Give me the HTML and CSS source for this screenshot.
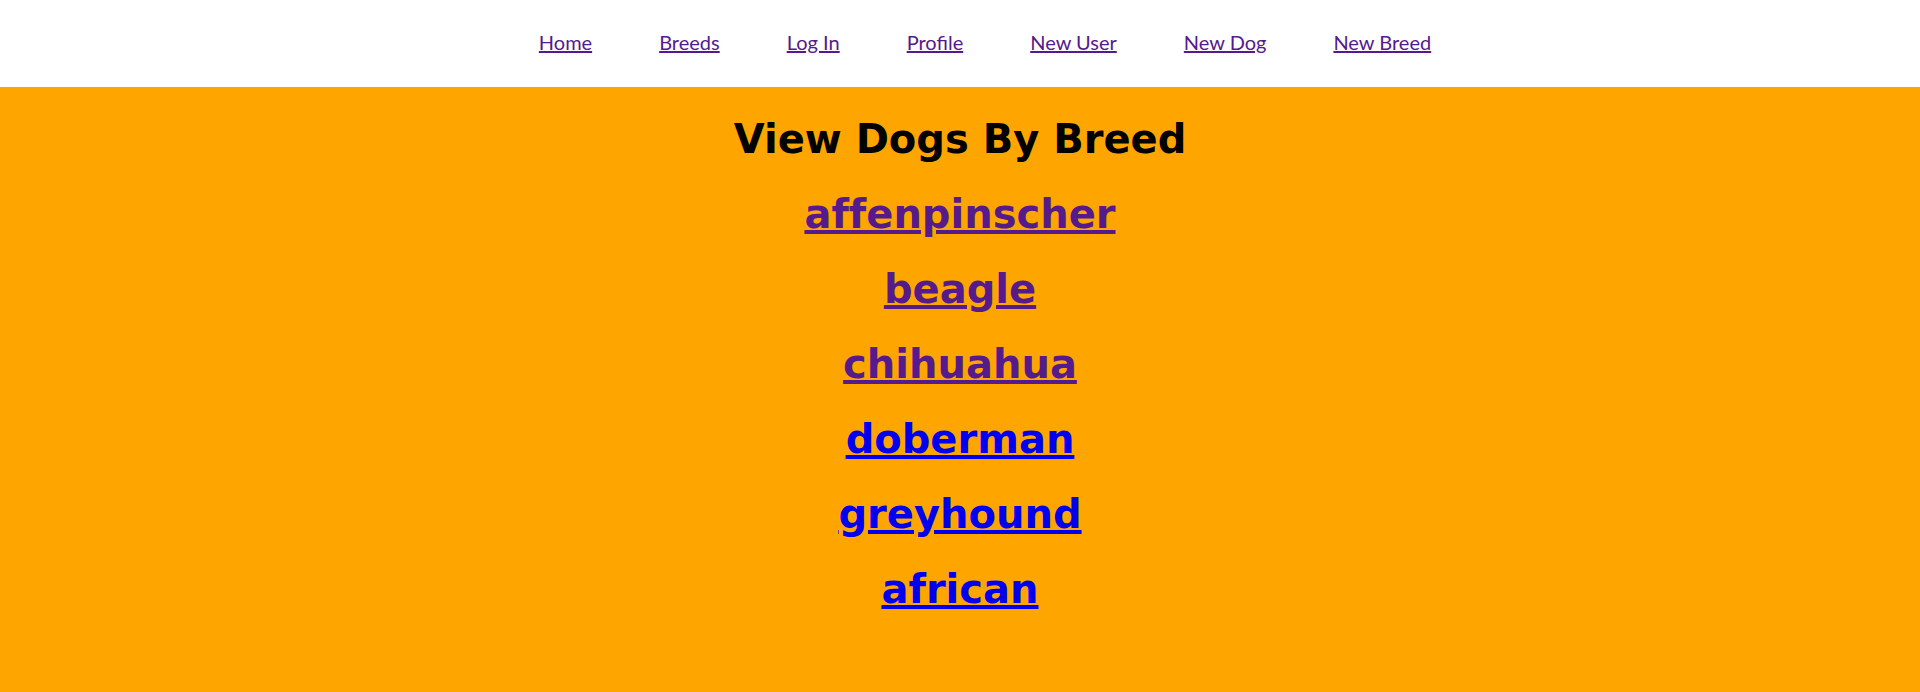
FILE: index.html
```html
<!DOCTYPE html>
<html>
<head>
<meta charset="utf-8">
<link rel="stylesheet" href="styles.css">
</head>
<body>
<nav class="topnav">
  <ul class="nav-list">
    <li><a class="nav-link" href="#">Home</a></li>
    <li><a class="nav-link" href="#">Breeds</a></li>
    <li><a class="nav-link" href="#">Log In</a></li>
    <li><a class="nav-link" href="#">Profile</a></li>
    <li><a class="nav-link" href="#">New User</a></li>
    <li><a class="nav-link" href="#">New Dog</a></li>
    <li><a class="nav-link" href="#">New Breed</a></li>
  </ul>
</nav>
<main class="content">
  <h1 class="title">View Dogs By Breed</h1>
  <a class="breed visited" href="#">affenpinscher</a>
  <a class="breed visited" href="#">beagle</a>
  <a class="breed visited" href="#">chihuahua</a>
  <a class="breed" href="#">doberman</a>
  <a class="breed" href="#">greyhound</a>
  <a class="breed" href="#">african</a>
</main>
</body>
</html>
```
FILE: styles.css
```css
html, body {
  margin: 0;
  padding: 0;
  height: 100%;
}
body {
  display: flex;
  flex-direction: column;
  background: #ffa500;
}
.topnav {
  background: #ffffff;
  height: 87px;
  flex: none;
}
.nav-list {
  list-style: none;
  margin: 0;
  padding: 0 0 3px 50px;
  box-sizing: border-box;
  height: 100%;
  display: flex;
  justify-content: center;
  align-items: center;
  gap: 67px;
}
.nav-link {
  font-family: Lato, "Liberation Sans", sans-serif;
  font-size: 20px;
  color: #551a8b;
  text-decoration: underline;
}
.content {
  flex: 1;
  display: flex;
  flex-direction: column;
  align-items: center;
  padding-top: 15px;
  font-family: "DejaVu Sans", Verdana, sans-serif;
  font-weight: bold;
  font-variant-ligatures: none;
}
.title {
  margin: 0;
  font-size: 40px;
  line-height: 75px;
  color: #000000;
}
.breed {
  font-size: 40px;
  line-height: 75px;
  color: #0000ee;
  text-decoration: underline;
}
.breed.visited {
  color: #551a8b;
}
```
